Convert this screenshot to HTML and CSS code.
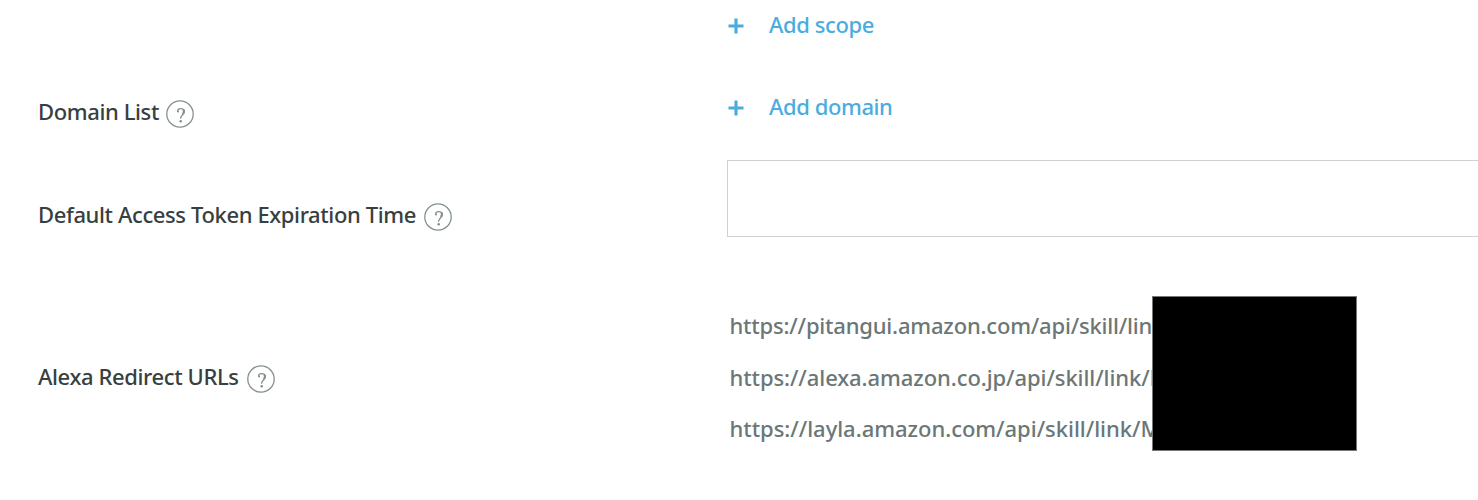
FILE: index.html
```html
<!DOCTYPE html>
<html lang="en">
<head>
<meta charset="utf-8">
<title>Account Linking</title>
<link rel="stylesheet" href="styles.css">
</head>
<body>
<main class="form">
  <div class="row row-scope">
    <div class="label"></div>
    <a class="add"><svg class="plus" viewBox="0 0 16 16"><path d="M8 .5v15M.5 8h15"/></svg><span class="add-text">Add scope</span></a>
  </div>
  <div class="row row-domain">
    <div class="label"><span class="label-text">Domain List</span><svg class="help" viewBox="0 0 28 28"><circle cx="14" cy="14" r="13.2"/><path d="M11.8 11.6C11.3 9.5 12.7 8.6 14.7 8.6c2.1 0 3.5 1.2 3.5 3.1 0 3-3.6 3.6-3.6 6.6v.5"/><path class="bold" d="M17.3 9.7c1.1 1.4.7 3-.5 4.3"/><circle class="dot" cx="12.1" cy="11.5" r="1"/><circle class="dot" cx="14.7" cy="21.2" r="1.3"/></svg></div>
    <a class="add"><svg class="plus" viewBox="0 0 16 16"><path d="M8 .5v15M.5 8h15"/></svg><span class="add-text">Add domain</span></a>
  </div>
  <div class="row row-expiry">
    <div class="label"><span class="label-text">Default Access Token Expiration Time</span><svg class="help" viewBox="0 0 28 28"><circle cx="14" cy="14" r="13.2"/><path d="M11.8 11.6C11.3 9.5 12.7 8.6 14.7 8.6c2.1 0 3.5 1.2 3.5 3.1 0 3-3.6 3.6-3.6 6.6v.5"/><path class="bold" d="M17.3 9.7c1.1 1.4.7 3-.5 4.3"/><circle class="dot" cx="12.1" cy="11.5" r="1"/><circle class="dot" cx="14.7" cy="21.2" r="1.3"/></svg></div>
    <div class="field"></div>
  </div>
  <div class="row row-urls">
    <div class="label"><span class="label-text">Alexa Redirect URLs</span><svg class="help" viewBox="0 0 28 28"><circle cx="14" cy="14" r="13.2"/><path d="M11.8 11.6C11.3 9.5 12.7 8.6 14.7 8.6c2.1 0 3.5 1.2 3.5 3.1 0 3-3.6 3.6-3.6 6.6v.5"/><path class="bold" d="M17.3 9.7c1.1 1.4.7 3-.5 4.3"/><circle class="dot" cx="12.1" cy="11.5" r="1"/><circle class="dot" cx="14.7" cy="21.2" r="1.3"/></svg></div>
    <div class="urls">
      <div class="url-pitangui">https://pitangui.amazon.com/api/skill/lin</div>
      <div class="url-alexa">https://alexa.amazon.co.jp/api/skill/link/M</div>
      <div class="url-layla">https://layla.amazon.com/api/skill/link/M</div>
      <div class="redaction"></div>
    </div>
  </div>
</main>
</body>
</html>
```
FILE: styles.css
```css
* { box-sizing: border-box; }
body {
  margin: 0;
  background: #fff;
  color: #37403f;
  font: 500 22px/30px "Noto Sans", "Open Sans", sans-serif;
  overflow: hidden;
}
.form { height: 500px; display: flex; flex-direction: column; overflow: hidden; }
.row { display: grid; grid-template-columns: 689px 1fr; padding-left: 38px; flex: none; }
.label, .add { display: flex; align-items: center; white-space: nowrap; }
.label-text { letter-spacing: -.385px; padding-bottom: 6px; }
.add-text { letter-spacing: -.42px; padding-bottom: 4px; }
.row-scope { height: 52px; }
.row-domain { height: 52px; margin-top: 30px; }
.row-domain .label { padding-top: 12px; }
.row-domain .help { margin-left: 7.3px; }
.row-expiry { height: 77px; margin-top: 26px; }
.row-expiry .label { padding-top: 36px; height: 77px; }
.row-urls { height: 155px; margin-top: 59px; }
.row-urls .label { padding-top: 8px; }
.help { width: 28px; height: 28px; margin-left: 8px; fill: none; stroke: #83908e; stroke-width: 1.3; }
.help .bold { stroke-width: 2; }
.help .dot { fill: #83908e; stroke: none; }
.add { color: #4bacdf; }
.plus { width: 16px; height: 16px; margin: 0 25px 0 1px; fill: none; stroke: #4bacdf; stroke-width: 3.2; }
.field { border: 1px solid #cdd2d4; border-right: 0; background: #fff; }
.urls { position: relative; padding: 4px 0 0 2.5px; color: #6b7776; white-space: nowrap; line-height: 51.5px; }
.url-pitangui { letter-spacing: -.19px; }
.url-alexa { letter-spacing: -.08px; }
.url-layla { letter-spacing: -.03px; }
.redaction { position: absolute; left: 425px; top: 0; width: 205px; height: 155px; background: #000; border: 1px solid #777; }
```
